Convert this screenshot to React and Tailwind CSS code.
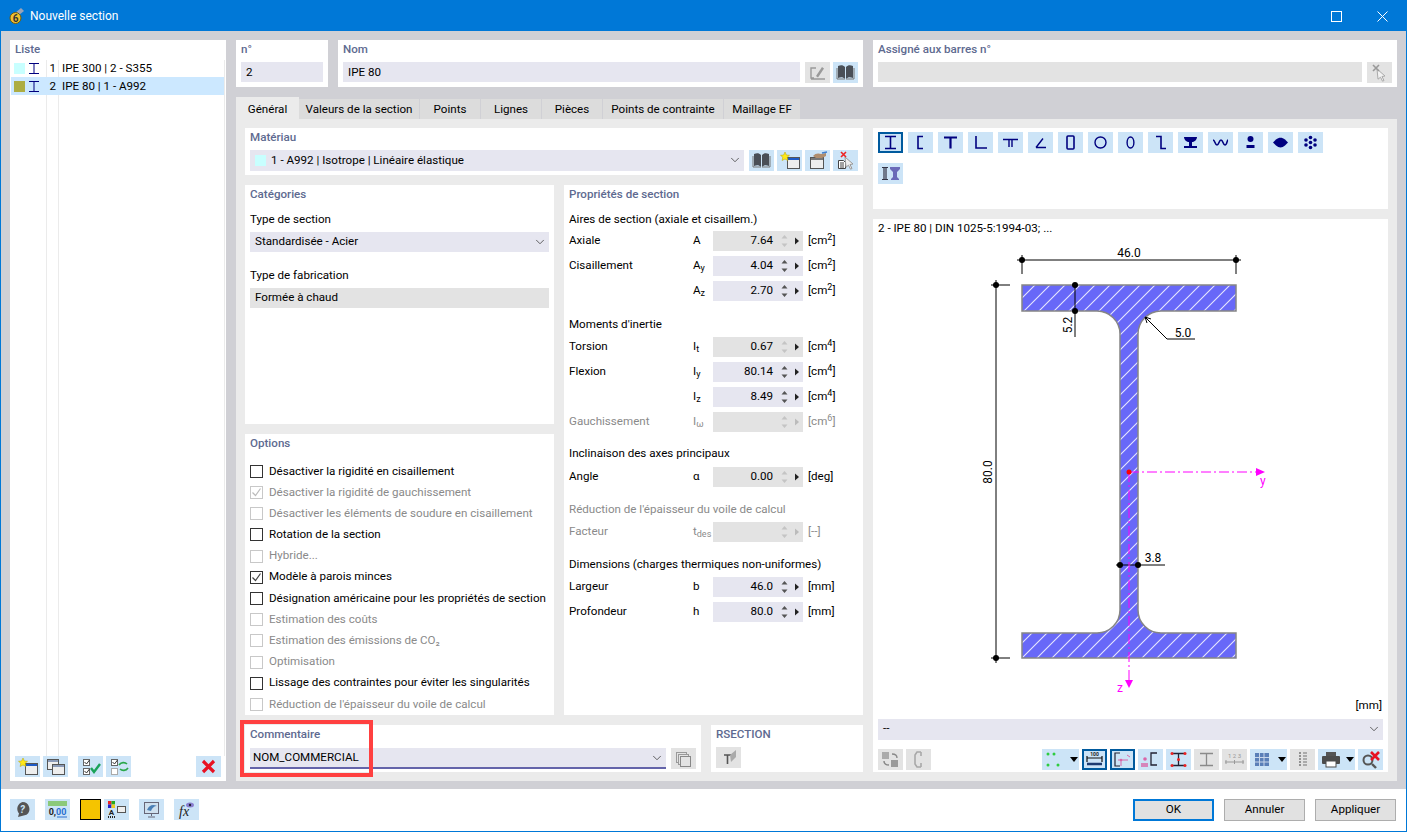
import { ChevronDown } from 'lucide-react'

const NAVY = '#00007f'

const Btn = ({ off, sel, wide, children }) => (
  <div
    className={`flex h-[21px] shrink-0 items-center justify-center ${wide ? 'w-[37px]' : 'w-[25px]'} ${off ? 'bg-[#e3e3e3]' : 'bg-[#cce4f7]'} ${sel ? 'border-2 border-[#005a9e]' : ''}`}
  >
    {children}
  </div>
)

const Ico = ({ children, w = 25 }) => (
  <svg width={w} height="21" viewBox={`0 0 ${w} 21`} fill="none" className="shrink-0">
    {children}
  </svg>
)

const Caret = () => <path d="M28 8h8l-4 5z" fill="#000" />

// ---- small icons
const Book = ({ c = '#4a4f57' }) => (
  <Ico>
    <path d="M5 4c3-1 5-1 7 1v12c-2-2-4-2-7-1zM20 4c-3-1-5-1-7 1v12c2-2 4-2 7-1z" fill={c} />
    <path d="M4 6v11h8M21 6v11h-8" stroke="#777" />
  </Ico>
)
const NewWin = () => (
  <Ico>
    <rect x="10.5" y="7.5" width="12" height="11" fill="#eee" stroke="#555" />
    <path d="M11 8h11v2H11z" fill="#1e5bc6" />
    <path d="M8 2l1.4 3 3.1.3-2.3 2 .7 3.2L8 9l-2.9 1.5.7-3.2-2.3-2L6.6 5z" fill="#ffe81a" stroke="#b3a100" strokeWidth=".5" />
  </Ico>
)
const HandWin = () => (
  <Ico>
    <rect x="5.5" y="7.5" width="13" height="11" fill="#eee" stroke="#555" />
    <path d="M6 8h12v2H6z" fill="#777" />
    <path d="M8 6c2-3 6-3 8-2l5-1v3l-4 2-6 0z" fill="#b08d6e" />
    <path d="M17 3l5-1" stroke="#3f7fd0" strokeWidth="1.5" />
  </Ico>
)
const CursorX = () => (
  <Ico>
    <path d="M5.5 10.5h5l2 2v6h-7z" fill="#fff" stroke="#444" />
    <path d="M7 13h4M7 15h4M7 17h4" stroke="#444" />
    <path d="M12 7l8 7-3 .5 2 4-1.5.7-2-4-2.5 2z" fill="#eee" stroke="#999" />
    <path d="M8 2l5 5M13 2L8 7" stroke="#e22" strokeWidth="1.6" />
  </Ico>
)
const CursorOff = () => (
  <Ico>
    <path d="M10 7l8 7-3 .5 2 4-1.5.7-2-4-2.5 2z" fill="#f2f2f2" stroke="#aaa" />
    <path d="M6 3l6 6M12 3L6 9" stroke="#999" strokeWidth="1.6" />
  </Ico>
)
const EditOff = () => (
  <Ico>
    <path d="M11 6H6v10h3M6 17h14" stroke="#9a9a9a" strokeWidth="1.4" />
    <path d="M11 14l6-9 2 1.5-6 9z" fill="#9a9a9a" />
  </Ico>
)
const CopyWin = () => (
  <Ico>
    <rect x="4.5" y="3.5" width="11" height="10" fill="#eee" stroke="#555" />
    <path d="M5 4h10v2H5z" fill="#8a9ab8" />
    <rect x="9.5" y="8.5" width="12" height="10" fill="#eee" stroke="#555" />
    <path d="M10 9h11v2H10z" fill="#8a9ab8" />
  </Ico>
)
const CheckAll = () => (
  <Ico>
    <rect x="5.5" y="3.5" width="6" height="6" fill="#fff" stroke="#666" />
    <rect x="5.5" y="12.5" width="6" height="6" fill="#fff" stroke="#666" />
    <path d="M6.5 6l2 2 3-4M6.5 15l2 2 3-4" stroke="#333" />
    <path d="M13 12l3 4 6-8" stroke="#1aa35a" strokeWidth="2.4" />
  </Ico>
)
const CheckSwap = () => (
  <Ico>
    <rect x="5.5" y="3.5" width="6" height="6" fill="#fff" stroke="#666" />
    <rect x="5.5" y="12.5" width="6" height="6" fill="#fff" stroke="#aaa" />
    <path d="M6.5 6l2 2 3-4" stroke="#333" />
    <path d="M13 9c2-3 6-3 8-1M22 12c-2 3-6 3-8 1" stroke="#2aa84a" strokeWidth="1.6" />
  </Ico>
)
const RedX = () => (
  <Ico>
    <path d="M7 5l11 11M18 5L7 16" stroke="#e81123" strokeWidth="3.2" />
  </Ico>
)
const MiniI = () => (
  <svg width="10" height="11" viewBox="0 0 10 11" className="shrink-0">
    <path d="M0 .5h10M5 .5v10M0 10.5h10" stroke={NAVY} strokeWidth="1" fill="none" />
  </svg>
)

const shapeIcons = [
  <path key="i" d="M7 4.5h11M12.5 4.5v12M7 16.5h11" stroke={NAVY} strokeWidth="1.6" />,
  <path key="c" d="M15 4.5H10v12h5" stroke={NAVY} strokeWidth="1.6" />,
  <path key="t" d="M6 5.5h13M12.5 5.5v11" stroke={NAVY} strokeWidth="2.2" />,
  <path key="l" d="M8 4v12h11" stroke={NAVY} strokeWidth="1.6" />,
  <path key="tt" d="M5 7.5h15M11 8v7M14 8v7" stroke={NAVY} strokeWidth="1.4" />,
  <path key="a" d="M8 15.5h10M8 15.5l7-9" stroke={NAVY} strokeWidth="1.4" />,
  <rect key="r" x="9" y="4" width="7" height="13" rx="1" stroke={NAVY} strokeWidth="1.6" />,
  <circle key="o" cx="12.5" cy="10.5" r="5.5" stroke={NAVY} strokeWidth="1.4" />,
  <ellipse key="e" cx="12.5" cy="10.5" rx="3.4" ry="5.5" stroke={NAVY} strokeWidth="1.4" />,
  <path key="z" d="M8 4.5h5v12h5" stroke={NAVY} strokeWidth="1.6" />,
  <path key="rail" d="M6 5h13c0 3-3 5-5 5v4h5v2H6v-2h5v-4C9 10 6 8 6 5z" fill={NAVY} />,
  <path key="w" d="M5 8c2 0 2 5 4 5s2-5 4-5 2 5 4 5 2-5 3-5" stroke={NAVY} strokeWidth="1.6" />,
  <g key="p" fill={NAVY}><circle cx="12.5" cy="7" r="3" /><rect x="8.5" y="13" width="8" height="3" /></g>,
  <path key="b" d="M5 10.5l3-3c3-2.5 6-2.5 9 0l3 3-3 3c-3 2.5-6 2.5-9 0z" fill={NAVY} />,
  <g key="d" fill={NAVY}>
    <circle cx="12.5" cy="5.5" r="1.8" /><circle cx="12.5" cy="15.5" r="1.8" /><circle cx="12.5" cy="10.5" r="1.8" />
    <circle cx="8" cy="8" r="1.8" /><circle cx="17" cy="8" r="1.8" /><circle cx="8" cy="13" r="1.8" /><circle cx="17" cy="13" r="1.8" />
  </g>,
]

// ---- generic fields
const Title = ({ children }) => (
  <div className="h-[18px] font-medium leading-[18px] text-[#5e6a90]">{children}</div>
)

const Field = ({ className = '', off, children }) => (
  <div className={`flex h-5 items-center px-[5px] pt-px ${off ? 'bg-[#e3e3e3]' : 'bg-[#e6e6f0]'} ${className}`}>{children}</div>
)

const Chev = () => <ChevronDown className="-mr-[3px] ml-auto h-[14px] w-[14px] shrink-0 text-[#444]" strokeWidth={1.4} />

const Sym = ({ s, sub, off }) => (
  <span className={off ? 'text-[#8a8a8a]' : ''}>
    {s}
    {sub && <span className="relative top-[2px] text-[9px]">{sub}</span>}
  </span>
)

const Spin = ({ off, grey }) => (
  <svg width="22" height="20" viewBox="0 0 22 20" className="ml-[7px] shrink-0">
    <path d="M4.5 4L1.5 7.5h6zM4.5 16l-3-3.5h6z" fill={off || grey ? '#c4c4c4' : '#555'} />
    <path d="M15 6.5l4 3.5-4 3.5z" fill={off ? '#bbb' : '#222'} />
  </svg>
)

const PropRow = ({ label, s, sub, value, unit, sup, grey, off }) => (
  <div className={`flex h-[25px] items-center pb-[3px] pt-[2px] ${off ? 'text-[#8a8a8a]' : ''}`}>
    <div className="w-[124px] shrink-0 pt-px">{label}</div>
    <div className="w-5 shrink-0 pt-px"><Sym s={s} sub={sub} off={off} /></div>
    <div className={`flex h-5 w-[90px] shrink-0 items-center justify-end pr-[1px] ${off || grey ? 'bg-[#e3e3e3]' : 'bg-[#e6e6f0]'}`}>
      <span className="pt-px">{value}</span>
      <Spin off={off} grey={grey} />
    </div>
    <div className="ml-[5px] pt-px">
      [{unit}{sup && <sup className="top-[-4px] text-[9px]">{sup}</sup>}]
    </div>
  </div>
)

const Sub = ({ className = '', off, children }) => (
  <div className={`flex h-[18px] items-center pt-px ${off ? 'text-[#8a8a8a]' : ''} ${className}`}>{children}</div>
)

const options = [
  ['Désactiver la rigidité en cisaillement'],
  ['Désactiver la rigidité de gauchissement', 'off', 'check'],
  ['Désactiver les éléments de soudure en cisaillement', 'off'],
  ['Rotation de la section'],
  ['Hybride...', 'off'],
  ['Modèle à parois minces', null, 'check'],
  ['Désignation américaine pour les propriétés de section'],
  ['Estimation des coûts', 'off'],
  ['Estimation des émissions de CO₂', 'off'],
  ['Optimisation', 'off'],
  ['Lissage des contraintes pour éviter les singularités'],
  ["Réduction de l'épaisseur du voile de calcul", 'off'],
]

const Option = ({ text, off, check }) => (
  <div className={`flex h-[21.2px] items-center gap-[6px] ${off ? 'text-[#8a8a8a]' : ''}`}>
    <div className={`flex h-[13px] w-[13px] shrink-0 items-center justify-center border bg-white ${off ? 'border-[#c8c8c8]' : 'border-[#333]'}`}>
      {check && (
        <svg width="11" height="11" viewBox="0 0 11 11">
          <path d="M1.5 5.5l3 3 5-7" fill="none" stroke={off ? '#bbb' : '#444'} strokeWidth="1.2" />
        </svg>
      )}
    </div>
    <span className="whitespace-nowrap">{text}</span>
  </div>
)

const tabs = [
  ['Valeurs de la section', 'w-[120px]'],
  ['Points', 'w-[60px]'],
  ['Lignes', 'w-[60px]'],
  ['Pièces', 'w-[60px]'],
  ['Points de contrainte', 'w-[120px]'],
  ['Maillage EF', 'w-[76px]'],
]

const ListPanel = () => (
  <div className="relative flex w-[216px] shrink-0 flex-col bg-white">
    <div className="px-[5px] pt-0"><Title>Liste</Title></div>
    <div className="relative mx-px mt-[2px] flex-1">
      <div className="absolute bottom-0 left-[35px] top-0 w-px bg-[#ebebeb]" />
      <div className="absolute bottom-0 left-[47px] top-0 w-px bg-[#ebebeb]" />
      <div className="absolute bottom-0 right-0 top-0 w-px bg-[#ebebeb]" />
      <div className="relative flex h-[17px] items-center">
        <div className="ml-[3px] h-[11px] w-[11px] bg-[#c8ffff]" />
        <div className="ml-1"><MiniI /></div>
        <div className="ml-[9px] w-[8px] pt-px text-right">1</div>
        <div className="ml-[6px] pt-px">IPE 300 | 2 - S355</div>
      </div>
      <div className="relative mr-[1px] flex h-[18px] items-center bg-[#cce8ff]">
        <div className="ml-[3px] h-[11px] w-[11px] bg-[#adad42]" />
        <div className="ml-1"><MiniI /></div>
        <div className="ml-[9px] w-[8px] pt-px text-right">2</div>
        <div className="ml-[6px] pt-px">IPE 80 | 1 - A992</div>
      </div>
    </div>
    <div className="flex h-[25px] items-start px-[5px] pb-1">
      <Btn><NewWin /></Btn>
      <div className="ml-[3px]"><Btn><CopyWin /></Btn></div>
      <div className="ml-[10px]"><Btn><CheckAll /></Btn></div>
      <div className="ml-[3px]"><Btn><CheckSwap /></Btn></div>
      <div className="ml-auto"><Btn><RedX /></Btn></div>
    </div>
  </div>
)

const TopRow = () => (
  <div className="flex h-[47px] gap-[10px]">
    <div className="w-[92px] bg-white px-[5px]">
      <Title>n°</Title>
      <Field className="mt-1">2</Field>
    </div>
    <div className="w-[525px] bg-white px-[5px]">
      <Title>Nom</Title>
      <div className="mt-1 flex">
        <Field className="w-[457px]">IPE 80</Field>
        <div className="ml-[5px]"><Btn off><EditOff /></Btn></div>
        <div className="ml-[3px]"><Btn><Book /></Btn></div>
      </div>
    </div>
    <div className="flex-1 bg-white px-[5px]">
      <Title>Assigné aux barres n°</Title>
      <div className="mt-1 flex">
        <Field off className="w-[484px]" />
        <div className="ml-[5px]"><Btn off><CursorOff /></Btn></div>
      </div>
    </div>
  </div>
)

const Tabs = () => (
  <div className="mt-[10px] flex h-[22px] items-end">
    <div className="flex h-[22px] w-[63px] items-center justify-center bg-[#ebebeb] pt-[4px]">Général</div>
    {tabs.map(([t, w]) => (
      <div key={t} className={`mr-px flex h-5 items-center justify-center bg-[#dcdcdc] pt-[3px] ${w}`}>{t}</div>
    ))}
  </div>
)

const MaterialPanel = () => (
  <div className="h-[47px] bg-white px-[5px]">
    <Title>Matériau</Title>
    <div className="mt-1 flex">
      <div className="flex h-[21px] w-[494px] items-center bg-[#e6e6f0] px-[5px]">
        <div className="h-[11px] w-[11px] bg-[#c8ffff]" />
        <span className="ml-[5px] pt-[2px]">1 - A992 | Isotrope | Linéaire élastique</span>
        <Chev />
      </div>
      <div className="ml-[5px] flex gap-[3px]">
        <Btn><Book /></Btn>
        <Btn><NewWin /></Btn>
        <Btn><HandWin /></Btn>
        <Btn><CursorX /></Btn>
      </div>
    </div>
  </div>
)

const Categories = () => (
  <div className="h-[239px] bg-white px-[5px]">
    <Title>Catégories</Title>
    <Sub className="mt-2">Type de section</Sub>
    <Field className="mt-[3px]">Standardisée - Acier<Chev /></Field>
    <Sub className="mt-[15px]">Type de fabrication</Sub>
    <Field off className="mt-[3px]">Formée à chaud</Field>
  </div>
)

const Options = () => (
  <div className="flex-1 bg-white px-[5px]">
    <Title>Options</Title>
    <div className="mt-[9px]">
      {options.map(([text, off, check]) => (
        <Option key={text} text={text} off={off} check={check} />
      ))}
    </div>
  </div>
)

const Properties = () => (
  <div className="w-[299px] bg-white px-[5px]">
    <Title>Propriétés de section</Title>
    <Sub className="mt-2">Aires de section (axiale et cisaillem.)</Sub>
    <PropRow label="Axiale" s="A" value="7.64" unit="cm" sup="2" grey />
    <PropRow label="Cisaillement" s="A" sub="y" value="4.04" unit="cm" sup="2" />
    <PropRow s="A" sub="z" value="2.70" unit="cm" sup="2" />
    <Sub className="mt-3">Moments d'inertie</Sub>
    <div className="mt-px">
      <PropRow label="Torsion" s="I" sub="t" value="0.67" unit="cm" sup="4" grey />
      <PropRow label="Flexion" s="I" sub="y" value="80.14" unit="cm" sup="4" />
      <PropRow s="I" sub="z" value="8.49" unit="cm" sup="4" />
      <PropRow label="Gauchissement" s="I" sub="ω" unit="cm" sup="6" off />
    </div>
    <Sub className="mt-[10px]">Inclinaison des axes principaux</Sub>
    <div className="mt-[2px]">
      <PropRow label="Angle" s="α" value="0.00" unit="deg" grey />
    </div>
    <Sub off className="mt-[11px]">Réduction de l'épaisseur du voile de calcul</Sub>
    <div className="mt-px">
      <PropRow label="Facteur" s="t" sub="des" unit="--" off />
    </div>
    <Sub className="mt-[11px]">Dimensions (charges thermiques non-uniformes)</Sub>
    <div className="mt-px">
      <PropRow label="Largeur" s="b" value="46.0" unit="mm" />
      <PropRow label="Profondeur" s="h" value="80.0" unit="mm" />
    </div>
  </div>
)

const CommentRow = () => (
  <div className="flex h-[47px] gap-[10px]">
    <div className="relative w-[456px] bg-white px-[5px]">
      <Title>Commentaire</Title>
      <div className="mt-[5px] flex items-start">
        <div className="flex h-[21px] w-[416px] items-center border-b-2 border-[#6464aa] bg-[#e6e6f0] pl-[3px] pr-[5px]">
          NOM_COMMERCIAL
          <Chev />
        </div>
        <div className="ml-[5px]">
          <Btn off>
            <Ico>
              <rect x="5.5" y="4.5" width="10" height="10" stroke="#999" />
              <rect x="7.5" y="6.5" width="10" height="10" fill="#e3e3e3" stroke="#999" />
              <rect x="9.5" y="8.5" width="10" height="10" fill="#e3e3e3" stroke="#888" />
            </Ico>
          </Btn>
        </div>
      </div>
      <div className="absolute -left-[5px] -top-[5px] h-[57px] w-[133px] border-4 border-[#ff4040]" />
    </div>
    <div className="flex-1 bg-white px-[5px]">
      <Title>RSECTION</Title>
      <div className="mt-1">
        <Btn off>
          <Ico>
            <path d="M8 8h7M11.5 8v9" stroke="#555" strokeWidth="1.6" />
            <path d="M14 8l6-5v7l-5 5z" fill="#aaa" />
          </Ico>
        </Btn>
      </div>
    </div>
  </div>
)

const ShapePanel = () => (
  <div className="h-[81px] bg-white px-[5px] pt-1">
    <div className="flex flex-wrap gap-x-[5px] gap-y-[5px]">
      {shapeIcons.map((s, i) => (
        <Btn key={i} sel={i === 0}>
          <svg width="25" height="21" viewBox="0 0 25 21" fill="none" className="shrink-0">{s}</svg>
        </Btn>
      ))}
      <div className="w-full" />
      <Btn>
        <Ico>
          <path d="M4 4.5h6M4 16.5h6M6 4.5v12M8 4.5v12" stroke="#334" strokeWidth="1.2" />
          <path d="M12 4h10v2l-3 3v5l2 2v1h-8v-1l2-2V9l-3-3z" fill="#6a6ab8" />
        </Ico>
      </Btn>
    </div>
  </div>
)

const Dot = ({ x, y }) => <circle cx={x} cy={y} r="3" fill="#000" />

const Drawing = () => (
  <svg width="515" height="460" viewBox="873 238 515 460" className="block" style={{ fontFamily: 'Roboto', fontSize: 12 }}>
    <defs>
      <pattern id="hatch" width="15" height="15" patternUnits="userSpaceOnUse">
        <rect width="15" height="15" fill="#6868f8" />
        <path d="M-2 2L2 -2M0 15L15 0M13 17L17 13" stroke="#e6e6ff" strokeWidth="1.1" />
      </pattern>
    </defs>
    <path
      d="M1022 285H1236V311H1161A23 23 0 0 0 1138 334V610A23 23 0 0 0 1161 633H1236V658H1022V633H1097A23 23 0 0 0 1120 610V334A23 23 0 0 0 1097 311H1022Z"
      fill="url(#hatch)"
      stroke="#858585"
      strokeWidth="1.5"
    />
    <g stroke="#000" strokeWidth="1" fill="none">
      <path d="M1017 260H1241M1022 255V274M1236 255V274" />
      <path d="M996 280V663M991 285H1010M991 658H1010" />
      <path d="M1075 285V337" />
      <path d="M1145 317L1167 339H1195" />
      <path d="M1116 565H1165" />
      <path d="M1145 317l6 2M1145 317l2 6" />
    </g>
    <Dot x={1022} y={260} /><Dot x={1236} y={260} /><Dot x={996} y={285} /><Dot x={996} y={658} />
    <Dot x={1075} y={285} /><Dot x={1075} y={311} /><Dot x={1120} y={565} /><Dot x={1138} y={565} />
    <g fill="#000" textAnchor="middle">
      <text x="1129" y="257">46.0</text>
      <text x="1183" y="337">5.0</text>
      <text x="1153" y="562">3.8</text>
      <text transform="translate(1072 325) rotate(-90)">5.2</text>
      <text transform="translate(992 472) rotate(-90)">80.0</text>
    </g>
    <path d="M1129 472H1256M1129 472V680" stroke="#ff00ff" strokeWidth="1" strokeDasharray="10 3 2 3" fill="none" />
    <path d="M1256 468l9 4-9 4zM1125 680h8l-4 8z" fill="#ff00ff" />
    <circle cx="1129" cy="472" r="2.5" fill="#f00" />
    <text x="1260" y="485" fill="#ff00ff">y</text>
    <text x="1117" y="692" fill="#ff00ff">z</text>
  </svg>
)

const PreviewPanel = () => (
  <div className="flex-1 bg-white px-[5px]">
    <div className="flex h-[19px] items-center pt-[2px]">2 - IPE 80 | DIN 1025-5:1994-03; ...</div>
    <div className="-mx-[5px]"><Drawing /></div>
    <div className="flex h-[14px] items-center justify-end pr-[1px] pt-[2px]">[mm]</div>
    <div className="mt-[7px] flex h-[21px] items-center bg-[#e6e6f0] px-[5px]">--<Chev /></div>
    <div className="mt-[9px] flex gap-[3px]">
      <Btn off>
        <Ico>
          <rect x="4" y="3" width="7" height="7" fill="#aaa" />
          <rect x="13" y="11" width="7" height="7" fill="#999" />
          <path d="M14 5c3 0 5 1 5 4M11 16c-3 0-5-1-5-4" stroke="#888" strokeWidth="1.4" fill="none" />
        </Ico>
      </Btn>
      <Btn off>
        <Ico><path d="M15 3h-4l-2 3v9l2 3h4M15 3v4M15 14v4" stroke="#a8a8a8" strokeWidth="1.6" fill="none" /></Ico>
      </Btn>
      <div className="ml-auto flex gap-[3px]">
        <Btn wide>
          <Ico w={37}>
            <g fill="#2ecc40"><circle cx="6" cy="5" r="1.5" /><circle cx="12" cy="5" r="1.5" /><circle cx="6" cy="16" r="1.5" /><circle cx="16" cy="16" r="1.5" /></g>
            <Caret />
          </Ico>
        </Btn>
        <Btn sel>
          <svg width="21" height="17" viewBox="0 0 21 17" fill="none">
            <text x="10.5" y="5" textAnchor="middle" fontSize="5" fontWeight="700" fill="#222">100</text>
            <path d="M3 7h15M3 5v6M18 5v6" stroke="#111" strokeWidth="1.2" />
            <path d="M3 13h15" stroke="#1d3a70" strokeWidth="2.5" />
          </svg>
        </Btn>
        <Btn sel>
          <svg width="21" height="17" viewBox="0 0 21 17" fill="none">
            <path d="M8 2H3v13h5" stroke="#223" strokeWidth="1.2" />
            <path d="M6 9h10M9 9v6M15 4l3 2" stroke="#d966a8" strokeWidth="1" />
            <circle cx="9" cy="9" r="1.3" fill="#d966a8" />
          </svg>
        </Btn>
        <Btn>
          <Ico>
            <path d="M19 4h-6v12h6" stroke="#223" strokeWidth="1.3" />
            <circle cx="7" cy="10" r="1.8" fill="#d966a8" />
            <path d="M3 17h7M3 15h7" stroke="#d966a8" strokeWidth="1.5" />
          </Ico>
        </Btn>
        <Btn>
          <Ico>
            <path d="M6 4.5h13M12.5 4.5v12M6 16.5h13" stroke="#223" strokeWidth="1.3" />
            <g fill="#e22"><circle cx="6" cy="4.5" r="1.5" /><circle cx="19" cy="4.5" r="1.5" /><circle cx="6" cy="16.5" r="1.5" /><circle cx="19" cy="16.5" r="1.5" /><circle cx="12.5" cy="10.5" r="1.5" /></g>
          </Ico>
        </Btn>
        <Btn off>
          <Ico><path d="M6 4.5h13M12.5 4.5v12M6 16.5h13" stroke="#8a8a8a" strokeWidth="1.3" /></Ico>
        </Btn>
        <Btn off>
          <Ico>
            <text x="12.5" y="9" textAnchor="middle" fontSize="6" fill="#999">1 2 3</text>
            <path d="M3 13h19M4 11v4M12.5 11v4M21 11v4" stroke="#999" />
          </Ico>
        </Btn>
        <Btn wide>
          <Ico w={37}>
            <rect x="5" y="4" width="14" height="13" fill="#5a7fb8" />
            <path d="M5 8.5h14M5 13h14M9.5 4v13M14 4v13" stroke="#c7d6ea" />
            <Caret />
          </Ico>
        </Btn>
        <Btn off>
          <Ico>
            <path d="M9 4h2M9 7h2M9 10h2M9 13h2M9 16h2" stroke="#777" strokeWidth="1.5" />
            <path d="M13 4h4M13 7h4M13 10h4M13 13h4M13 16h4" stroke="#999" strokeWidth="1.5" />
          </Ico>
        </Btn>
        <Btn wide>
          <Ico w={37}>
            <rect x="8" y="3" width="10" height="5" fill="#555" />
            <rect x="4" y="7" width="18" height="8" rx="1" fill="#4c4c4c" />
            <rect x="8" y="12" width="10" height="6" fill="#fff" stroke="#4c4c4c" />
            <Caret />
          </Ico>
        </Btn>
        <Btn>
          <Ico>
            <circle cx="10" cy="11" r="4.5" stroke="#555" strokeWidth="2" />
            <path d="M14 15l4 4" stroke="#555" strokeWidth="2.4" />
            <path d="M13 3l8 8M21 3l-8 8" stroke="#e81123" strokeWidth="2.6" />
          </Ico>
        </Btn>
      </div>
    </div>
  </div>
)

const Footer = () => (
  <div className="flex h-[42px] items-start bg-white pl-[9px] pr-[10px] pt-[10px]">
    <Btn>
      <Ico>
        <path d="M12.5 3a7 7 0 0 1 4 12.7L8 18l1-3.6A7 7 0 0 1 12.5 3z" fill="#555" />
        <text x="12.5" y="13.5" textAnchor="middle" fontSize="10" fontWeight="700" fontStyle="italic" fill="#cce4f7">?</text>
      </Ico>
    </Btn>
    <div className="ml-[10px]">
      <Btn>
        <Ico>
          <rect x="3" y="2" width="19" height="5" fill="#8bc97a" />
          <text x="12.5" y="16" textAnchor="middle" fontSize="9" fontWeight="700" fill="#222">0,<tspan fill="#2a6fd0">00</tspan></text>
          <path d="M12 18h10" stroke="#2a6fd0" />
        </Ico>
      </Btn>
    </div>
    <div className="ml-[10px] h-[21px] w-[21px] border border-black bg-[#f5c400]" />
    <div className="ml-[3px]">
      <Btn>
        <Ico>
          <rect x="4" y="2" width="3.5" height="3.5" fill="#e22" /><rect x="7.5" y="2" width="3.5" height="3.5" fill="#2a2" />
          <rect x="4" y="5.5" width="3.5" height="3.5" fill="#22c" /><rect x="7.5" y="5.5" width="3.5" height="3.5" fill="#ec2" />
          <text x="7.5" y="16" textAnchor="middle" fontSize="8" fontWeight="700" fill="#222">A</text>
          <path d="M4 18h7" stroke="#222" strokeDasharray="1 1" strokeWidth="2" />
          <rect x="13.5" y="7.5" width="8" height="6" fill="#eee" stroke="#555" />
        </Ico>
      </Btn>
    </div>
    <div className="ml-[10px]">
      <Btn>
        <Ico>
          <rect x="5.5" y="3.5" width="14" height="11" fill="#cfe0ee" stroke="#667" />
          <path d="M8 11c2-5 6-6 10-4-3 0-5 2-6 5z" fill="#4a7fb5" />
          <path d="M12.5 15v2M9 18h7" stroke="#667" />
        </Ico>
      </Btn>
    </div>
    <div className="ml-[10px]">
      <Btn>
        <Ico>
          <text x="5" y="17" fontSize="14" fontStyle="italic" fontFamily="Liberation Serif" fill="#222">fx</text>
          <ellipse cx="16" cy="6" rx="4" ry="2.5" fill="#8a7fd0" />
          <circle cx="16" cy="6" r="1.2" fill="#223" />
        </Ico>
      </Btn>
    </div>
    <div className="ml-auto flex gap-[10px]">
      <div className="flex h-[22px] w-[81px] items-center justify-center border-2 border-[#0078d7] bg-[#e1e1e1]">OK</div>
      <div className="flex h-[22px] w-[81px] items-center justify-center border border-[#adadad] bg-[#e1e1e1]">Annuler</div>
      <div className="flex h-[22px] w-[81px] items-center justify-center border border-[#adadad] bg-[#e1e1e1]">Appliquer</div>
    </div>
  </div>
)

export default function App() {
  return (
    <div className="flex h-[832px] w-[1407px] flex-col overflow-hidden border border-[#0078d7] bg-white font-['Roboto',sans-serif] text-[11.6px] leading-none text-black">
      <div className="flex h-[30px] shrink-0 items-center bg-[#0078d7] pl-2 text-white">
        <svg width="16" height="18" viewBox="0 0 16 18" className="shrink-0">
          <path d="M6 6l6-5 3 3-5 4z" fill="#9aa3b8" />
          <circle cx="6.5" cy="11" r="5.5" fill="#f2c230" stroke="#6b5a10" />
          <text x="6.5" y="15" textAnchor="middle" fontSize="10" fontWeight="700" fill="#333">6</text>
        </svg>
        <span className="ml-[5px] text-[12px]">Nouvelle section</span>
        <div className="ml-auto flex items-center">
          <svg width="11" height="11" viewBox="0 0 11 11" className="mr-[35px]">
            <rect x=".5" y=".5" width="10" height="10" fill="none" stroke="#fff" />
          </svg>
          <svg width="11" height="11" viewBox="0 0 11 11" className="mr-[18px]">
            <path d="M.5.5l10 10M10.5.5l-10 10" stroke="#fff" />
          </svg>
        </div>
      </div>

      <div className="flex h-[758px] shrink-0 gap-[10px] bg-[#d0d0d5] pl-[9px] pr-[9px] pt-[9px] pb-2">
        <ListPanel />
        <div className="flex min-w-0 flex-1 flex-col">
          <TopRow />
          <Tabs />
          <div className="flex flex-1 gap-[10px] bg-[#ebebeb] p-[9px]">
            <div className="flex w-[618px] shrink-0 flex-col gap-[10px]">
              <MaterialPanel />
              <div className="flex flex-1 gap-[10px]">
                <div className="flex w-[309px] flex-col gap-[10px]">
                  <Categories />
                  <Options />
                </div>
                <Properties />
              </div>
              <CommentRow />
            </div>
            <div className="flex flex-1 flex-col gap-[10px]">
              <ShapePanel />
              <PreviewPanel />
            </div>
          </div>
        </div>
      </div>

      <Footer />
    </div>
  )
}
